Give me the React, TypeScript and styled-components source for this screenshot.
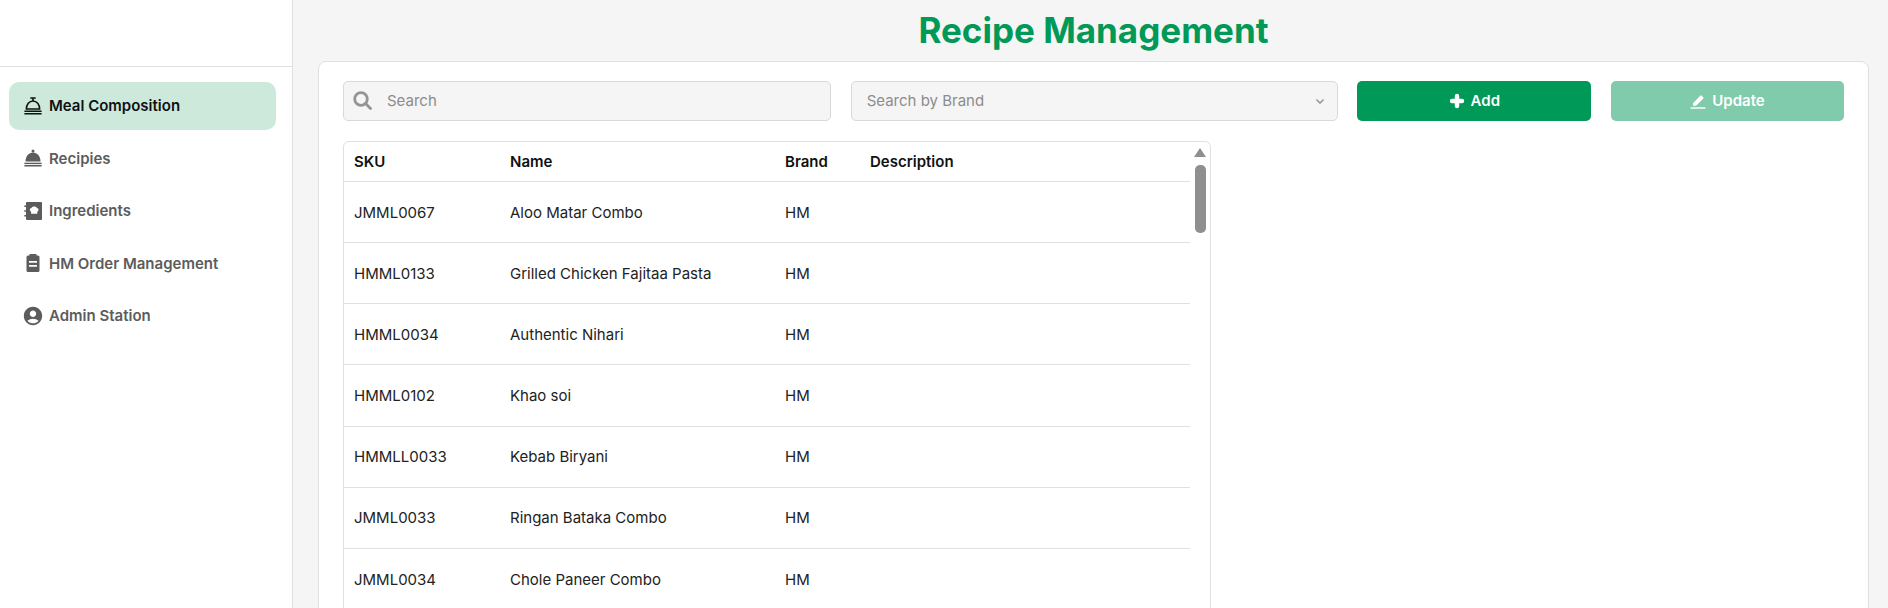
import React from "react";
import styled, { createGlobalStyle } from "styled-components";
import { MdAccountCircle } from "react-icons/md";

const Global = createGlobalStyle`
  html, body { margin: 0; padding: 0; background: #f5f5f5; }
  body { font-family: Inter, "Liberation Sans", sans-serif; overflow: hidden; }
  * { box-sizing: border-box; }
`;

const Page = styled.div`
  display: flex;
  height: 608px;
  overflow: hidden;
`;
const Sidebar = styled.aside`
  width: 293px;
  flex: none;
  background: #fff;
  border-right: 1px solid #e0e0e0;
`;
const SidebarTop = styled.div`
  height: 67px;
  border-bottom: 1px solid #e0e0e0;
`;
const Nav = styled.nav`
  display: flex;
  flex-direction: column;
  gap: 4.5px;
  padding: 15px 16px 0 9px;
`;
const NavItem = styled.div<{ $active?: boolean }>`
  display: flex;
  align-items: center;
  gap: 5px;
  height: 48px;
  padding: 0 0 1px 13px;
  border-radius: 10px;
  font-size: 15px;
  font-weight: 600;
  color: ${(p) => (p.$active ? "#111" : "#5c5c5c")};
  background: ${(p) => (p.$active ? "#cce9dc" : "transparent")};
  svg { width: 22px; height: 22px; flex: none; }
`;
const Main = styled.main`
  flex: 1;
  min-width: 0;
  padding: 0 19px 0 25px;
  display: flex;
  flex-direction: column;
`;
const Title = styled.h1`
  flex: none;
  margin: 0;
  height: 61px;
  line-height: 60px;
  text-align: center;
  font-size: 35px;
  font-weight: 700;
  color: #009957;
`;
const Card = styled.section`
  flex: none;
  height: 600px;
  padding: 19px 24px 0;
  background: #fff;
  border: 1px solid #e0e0e0;
  border-radius: 8px;
`;
const Toolbar = styled.div`
  display: grid;
  grid-template-columns: 488px 487px 234px 233px;
  column-gap: 19.67px;
  height: 40px;
`;
const Field = styled.div`
  display: flex;
  align-items: center;
  height: 40px;
  padding-bottom: 1px;
  background: #f5f5f5;
  border: 1px solid #d9d9d9;
  border-radius: 5px;
  font-size: 15px;
  color: #8c8c8c;
`;
const SearchField = styled(Field)`
  padding-left: 9px;
  gap: 15px;
  svg { width: 19px; height: 19px; flex: none; }
`;
const SelectField = styled(Field)`
  justify-content: space-between;
  padding: 0 12px 1px 15px;
  svg { width: 10px; height: 10px; }
`;
const Button = styled.div<{ $faded?: boolean }>`
  display: flex;
  align-items: center;
  justify-content: center;
  gap: 6px;
  height: 40px;
  padding-bottom: 1px;
  border-radius: 5px;
  font-size: 15px;
  font-weight: 600;
  color: #fff;
  background: ${(p) => (p.$faded ? "#80cbab" : "#009957")};
  svg { width: 16px; height: 16px; flex: none; }
`;
const TableBox = styled.div`
  display: flex;
  width: 868px;
  height: 560px;
  margin-top: 20px;
  border: 1px solid #e0e0e0;
  border-radius: 6px;
`;
const Table = styled.div`
  flex: 1;
  min-width: 0;
`;
const Row = styled.div<{ $head?: boolean }>`
  display: grid;
  grid-template-columns: 156px 275px 85px 1fr;
  align-items: center;
  height: ${(p) => (p.$head ? "40px" : "61.17px")};
  padding-left: 10px;
  border-bottom: 1px solid #e0e0e0;
  font-size: 15px;
  font-weight: ${(p) => (p.$head ? 600 : 400)};
  color: ${(p) => (p.$head ? "#111" : "#222")};
`;
const Rail = styled.div`
  width: 20px;
  flex: none;
  display: flex;
  flex-direction: column;
  align-items: center;
  padding-top: 6px;
`;
const RailArrow = styled.div`
  width: 0;
  height: 0;
  border-left: 6.500px solid transparent;
  border-right: 6.500px solid transparent;
  border-bottom: 9px solid #8f8f8f;
`;
const RailThumb = styled.div`
  width: 11px;
  height: 68px;
  margin-top: 8px;
  border-radius: 5px;
  background: #8f8f8f;
`;

const rows = [
  ["JMML0067", "Aloo Matar Combo"],
  ["HMML0133", "Grilled Chicken Fajitaa Pasta"],
  ["HMML0034", "Authentic Nihari"],
  ["HMML0102", "Khao soi"],
  ["HMMLL0033", "Kebab Biryani"],
  ["JMML0033", "Ringan Bataka Combo"],
  ["JMML0034", "Chole Paneer Combo"],
];

const BellOutlineIcon = () => (
  <svg viewBox="-2 -2 22 22" fill="none" stroke="currentColor" strokeWidth="1.600">
    <path d="M6.300 1h5.400M9 1v3" />
    <path d="M2.400 12C2.400 7.300 5.200 4 9 4s6.600 3.300 6.600 8z" />
    <path d="M.4 14.300h17.200M.4 16.800h17.200" />
  </svg>
);
const BellFilledIcon = () => (
  <svg viewBox="-2 -2 22 22" fill="currentColor">
    <circle cx="9" cy="2" r="1.500" />
    <path d="M1.500 12.500C1.500 7.300 4.800 3.500 9 3.500s7.500 3.800 7.500 9z" />
    <rect x="0.400" y="13.700" width="17.200" height="1.400" />
    <rect x="0.400" y="16" width="17.200" height="1.500" />
  </svg>
);
const NotebookIcon = () => (
  <svg viewBox="-2 -2 22 22" fill="currentColor">
    <path d="M3 0h14a1 1 0 0 1 1 1v16a1 1 0 0 1-1 1H3a1 1 0 0 1-1-1v-2.500H.3v-1.600H2v-3.100H.3V8.200H2V5.100H.3V3.500H2V1a1 1 0 0 1 1-1z" />
    <path fill="#fff" d="M7.500 6c.4-1 1.400-1.500 2.700-1.500s2.300.5 2.700 1.500c1 .1 1.700.9 1.700 1.800 0 .8-.5 1.500-1.300 1.700v2.300H7.100V9.500c-.8-.2-1.300-.9-1.300-1.700 0-.9.700-1.700 1.700-1.800z" />
  </svg>
);
const ClipboardIcon = () => (
  <svg viewBox="-2 -2 22 22" fill="currentColor">
    <path fillRule="evenodd" d="M5.500 1V0h7v1.500H14A1.500 1.500 0 0 1 15.500 3v13.500A1.500 1.500 0 0 1 14 18H4a1.500 1.500 0 0 1-1.500-1.500V3A1.500 1.500 0 0 1 4 1.500h1.500zM5 7v1.800h8V7H5zm0 4v1.800h8V11H5z" />
  </svg>
);
const SearchIcon = () => (
  <svg viewBox="0 0 19 19" fill="none" stroke="#949494" strokeWidth="2.800">
    <circle cx="8" cy="8" r="6.300" />
    <path d="M12.500 12.500l5 5" strokeLinecap="round" />
  </svg>
);
const ChevronIcon = () => (
  <svg viewBox="0 0 10 10" fill="none" stroke="#9a9a9a" strokeWidth="1.600">
    <path d="M1.500 3.500L5 7l3.500-3.500" />
  </svg>
);
const PlusIcon = () => (
  <svg viewBox="0 0 16 16" fill="none" stroke="#fff" strokeWidth="4.400" strokeLinecap="round">
    <path d="M8 3v10M3 8h10" />
  </svg>
);
const PenIcon = () => (
  <svg viewBox="0 0 16 16" fill="#fff">
    <path d="M3 10.300L10.200 2.700a1.100 1.100 0 0 1 1.500 0l1.500 1.500a1.100 1.100 0 0 1 0 1.500L6 12.700H3z" />
    <rect x="0.500" y="14.300" width="15" height="1.400" />
  </svg>
);

export default function App() {
  return (
    <Page>
      <Global />
      <Sidebar>
        <SidebarTop />
        <Nav>
          <NavItem $active><BellOutlineIcon />Meal Composition</NavItem>
          <NavItem><BellFilledIcon />Recipies</NavItem>
          <NavItem><NotebookIcon />Ingredients</NavItem>
          <NavItem><ClipboardIcon />HM Order Management</NavItem>
          <NavItem><MdAccountCircle />Admin Station</NavItem>
        </Nav>
      </Sidebar>
      <Main>
        <Title>Recipe Management</Title>
        <Card>
          <Toolbar>
            <SearchField><SearchIcon />Search</SearchField>
            <SelectField>Search by Brand<ChevronIcon /></SelectField>
            <Button><PlusIcon />Add</Button>
            <Button $faded><PenIcon />Update</Button>
          </Toolbar>
          <TableBox>
            <Table>
              <Row $head><span>SKU</span><span>Name</span><span>Brand</span><span>Description</span></Row>
              {rows.map(([sku, name]) => (
                <Row key={sku}><span>{sku}</span><span>{name}</span><span>HM</span><span /></Row>
              ))}
            </Table>
            <Rail><RailArrow /><RailThumb /></Rail>
          </TableBox>
        </Card>
      </Main>
    </Page>
  );
}
